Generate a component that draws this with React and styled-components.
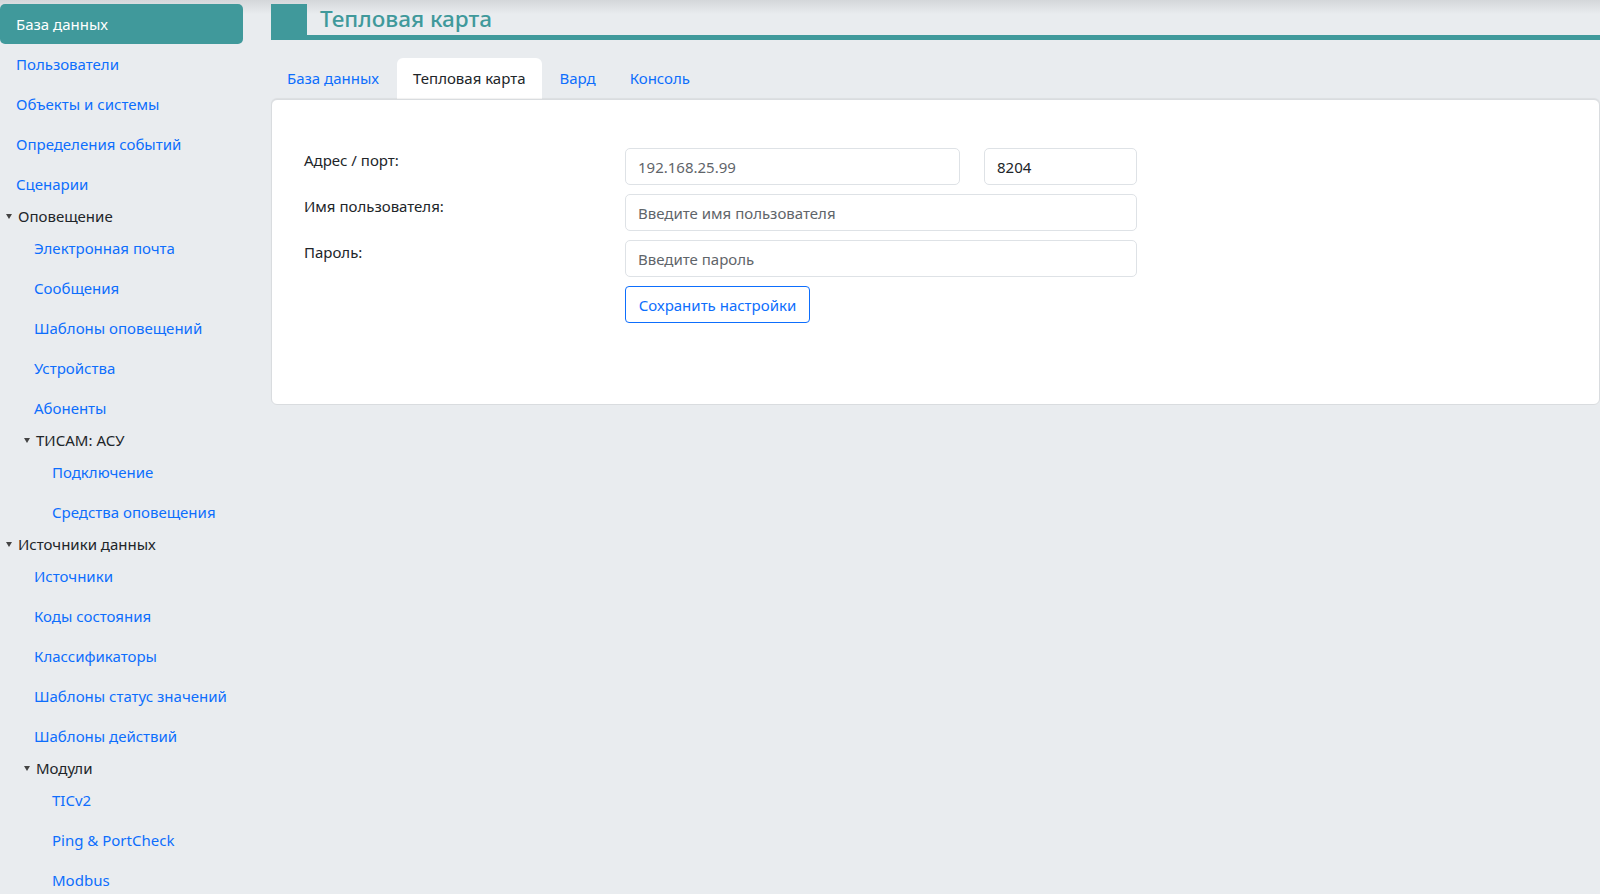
import styled, { createGlobalStyle } from "styled-components";

const GlobalStyle = createGlobalStyle`
  * { box-sizing: border-box; }
  body {
    margin: 0;
    font-family: "Segoe UI", "Noto Sans", sans-serif;
    font-size: 15px;
    color: #212529;
    background: linear-gradient(to bottom, #d4d7da 0px, #e9ecef 14px) no-repeat, #e9ecef;
    min-height: 894px;
  }
`;

const Layout = styled.div`
  display: grid;
  grid-template-columns: 243px 1fr;
  column-gap: 28px;
`;

const Sidebar = styled.nav`
  display: flex;
  flex-direction: column;
  padding-top: 4px;
`;

const NavItem = styled.a`
  display: block;
  padding: 8px 16px 8px ${(p) => 16 + p.$level * 18}px;
  line-height: 24px;
  color: ${(p) => (p.$active ? "#fff" : "#0d6efd")};
  background: ${(p) => (p.$active ? "#40999b" : "transparent")};
  border-radius: 5px;
  text-decoration: none;
  white-space: nowrap;
`;

const GroupTitle = styled.div`
  display: flex;
  align-items: center;
  padding-left: ${(p) => 6 + p.$level * 18}px;
  line-height: 24px;
  color: #212529;

  &::before {
    content: "";
    width: 0;
    height: 0;
    border-left: 3px solid transparent;
    border-right: 3px solid transparent;
    border-top: 5px solid #444;
    margin-right: 6px;
  }
`;

const Main = styled.main`
  display: flex;
  flex-direction: column;
  padding-top: 4px;
`;

const PageHeader = styled.div`
  display: flex;
  align-items: stretch;
  height: 36px;
  border-bottom: 5px solid #40999b;
`;

const HeaderMark = styled.div`
  width: 36px;
  background: #40999b;
`;

const PageTitle = styled.h1`
  margin: 0;
  padding-left: 13px;
  font-size: 22.5px;
  font-weight: 500;
  line-height: 30px;
  color: #40999b;
`;

const Tabs = styled.div`
  display: flex;
  gap: 2px;
  margin-top: 18px;
`;

const Tab = styled.a`
  padding: 8px 16px 9px;
  line-height: 24px;
  color: ${(p) => (p.$active ? "#212529" : "#0d6efd")};
  background: ${(p) => (p.$active ? "#fff" : "transparent")};
  border-radius: 6px 6px 0 0;
  text-decoration: none;
`;

const Card = styled.section`
  background: #fff;
  border: 1px solid #d9dcdf;
  border-radius: 6px;
  box-shadow: 0 -1px 1px rgba(0, 0, 0, 0.06);
  padding: 48px 32px 80px;
  height: 306px;
`;

const Form = styled.div`
  display: grid;
  grid-template-columns: 321px 512px;
  row-gap: 9px;
`;

const Label = styled.label`
  line-height: 24px;
`;

const Fields = styled.div`
  display: flex;
  gap: 24px;
`;

const Input = styled.input`
  width: ${(p) => p.$width || "100%"};
  height: 37px;
  padding: 0 12px;
  border: 1px solid #dee2e6;
  border-radius: 5px;
  font: inherit;
  color: #212529;
  background: #fff;

  &::placeholder {
    color: #5f656a;
  }
`;

const SaveButton = styled.button`
  grid-column: 2;
  justify-self: start;
  width: 185px;
  height: 37px;
  padding: 0 12px;
  border: 1px solid #0d6efd;
  border-radius: 4px;
  background: #fff;
  color: #0d6efd;
  font: inherit;
`;

const menu = [
  { type: "link", text: "База данных", level: 0, active: true },
  { type: "link", text: "Пользователи", level: 0 },
  { type: "link", text: "Объекты и системы", level: 0 },
  { type: "link", text: "Определения событий", level: 0 },
  { type: "link", text: "Сценарии", level: 0 },
  { type: "group", text: "Оповещение", level: 0 },
  { type: "link", text: "Электронная почта", level: 1 },
  { type: "link", text: "Сообщения", level: 1 },
  { type: "link", text: "Шаблоны оповещений", level: 1 },
  { type: "link", text: "Устройства", level: 1 },
  { type: "link", text: "Абоненты", level: 1 },
  { type: "group", text: "ТИСАМ: АСУ", level: 1 },
  { type: "link", text: "Подключение", level: 2 },
  { type: "link", text: "Средства оповещения", level: 2 },
  { type: "group", text: "Источники данных", level: 0 },
  { type: "link", text: "Источники", level: 1 },
  { type: "link", text: "Коды состояния", level: 1 },
  { type: "link", text: "Классификаторы", level: 1 },
  { type: "link", text: "Шаблоны статус значений", level: 1 },
  { type: "link", text: "Шаблоны действий", level: 1 },
  { type: "group", text: "Модули", level: 1 },
  { type: "link", text: "TICv2", level: 2 },
  { type: "link", text: "Ping & PortCheck", level: 2 },
  { type: "link", text: "Modbus", level: 2 },
];

const tabs = ["База данных", "Тепловая карта", "Вард", "Консоль"];

function App() {
  return (
    <>
      <GlobalStyle />
      <Layout>
        <Sidebar>
          {menu.map((item) =>
            item.type === "group" ? (
              <GroupTitle key={item.text} $level={item.level}>
                {item.text}
              </GroupTitle>
            ) : (
              <NavItem key={item.text} href="#" $level={item.level} $active={item.active}>
                {item.text}
              </NavItem>
            )
          )}
        </Sidebar>

        <Main>
          <PageHeader>
            <HeaderMark />
            <PageTitle>Тепловая карта</PageTitle>
          </PageHeader>

          <Tabs>
            {tabs.map((t) => (
              <Tab key={t} href="#" $active={t === "Тепловая карта"}>
                {t}
              </Tab>
            ))}
          </Tabs>

          <Card>
            <Form>
              <Label>Адрес / порт:</Label>
              <Fields>
                <Input $width="335px" placeholder="192.168.25.99" />
                <Input $width="153px" defaultValue="8204" />
              </Fields>
              <Label>Имя пользователя:</Label>
              <Input placeholder="Введите имя пользователя" />
              <Label>Пароль:</Label>
              <Input type="password" placeholder="Введите пароль" />
              <SaveButton>Сохранить настройки</SaveButton>
            </Form>
          </Card>
        </Main>
      </Layout>
    </>
  );
}

export default App;
